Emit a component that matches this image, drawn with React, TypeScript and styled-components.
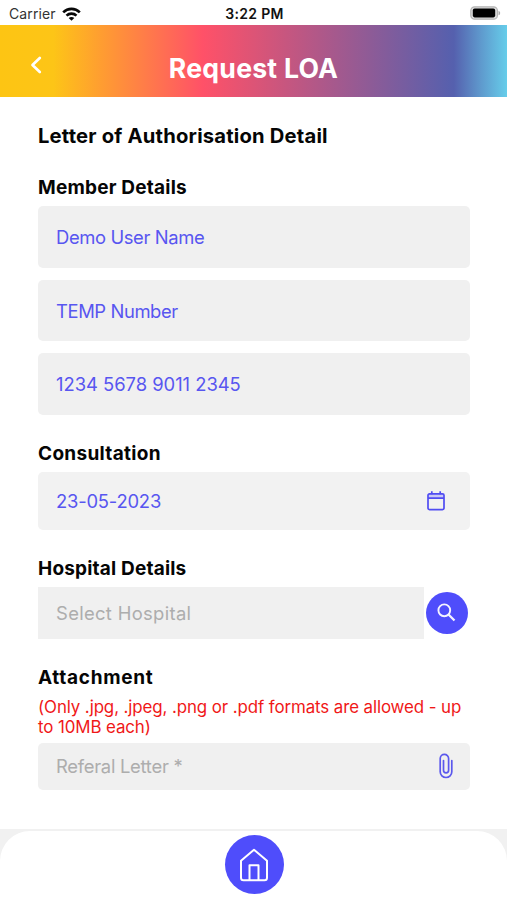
import React from "react";
import styled, { createGlobalStyle } from "styled-components";

const GlobalStyle = createGlobalStyle`
  * { box-sizing: border-box; }
  body { margin: 0; background: #fff; font-family: Inter, "Liberation Sans", sans-serif; }
`;

const Screen = styled.main`
  width: 507px;
  height: 900px;
  display: flex;
  flex-direction: column;
  background: #fff;
  overflow: hidden;
`;

const StatusBar = styled.div`
  height: 25px;
  flex: none;
  display: grid;
  grid-template-columns: 1fr auto 1fr;
  align-items: center;
  padding: 2px 6px 0 9px;
  color: #111;
`;

const Carrier = styled.span`
  display: flex;
  align-items: center;
  gap: 6px;
  font-size: 14px;
  letter-spacing: 0.1px;
  color: #333;
`;

const Clock = styled.span`
  margin-left: -1px;
  font-size: 14px;
  font-weight: 600;
  letter-spacing: 0.3px;
`;

const BatterySlot = styled.span`
  display: flex;
  justify-content: flex-end;
  padding-bottom: 1px;
`;

const Header = styled.header`
  height: 72px;
  flex: none;
  display: grid;
  grid-template-columns: 72px 1fr 72px;
  align-items: center;
  background: linear-gradient(90deg, #fdc513 0%, #fdc517 10.5%, #ff9d31 20%, #ff5168 40%, #5560ae 89.5%, #5f9bce 95%, #66cdea 100%);
`;

const BackButton = styled.button`
  border: 0;
  padding: 0;
  height: 32px;
  margin-top: 8px;
  background: none;
  display: flex;
  align-items: center;
  justify-content: center;
`;

const Title = styled.h1`
  margin: 14px 0 0;
  text-align: center;
  color: #fff;
  font-size: 26.6px;
  line-height: 34px;
  font-weight: 700;
  letter-spacing: 0.25px;
`;

const Content = styled.section`
  flex: none;
  height: 732px;
  padding: 25px 37px 0 38px;
`;

const PageHeading = styled.h2`
  margin: 0;
  font-size: 20.2px;
  line-height: 28px;
  font-weight: 700;
  letter-spacing: 0.2px;
  color: #050505;
`;

const Section = styled.section<{ $top: number }>`
  margin-top: ${(p) => p.$top}px;
`;

const SectionHeading = styled.h3<{ $spacing: number }>`
  margin: 0;
  height: 26px;
  font-size: 19px;
  line-height: 28px;
  font-weight: 700;
  letter-spacing: ${(p) => p.$spacing}px;
  color: #050505;
`;

const FieldStack = styled.div`
  margin-top: 6px;
  display: grid;
  gap: 12px;
`;

const Field = styled.div<{ $height: number; $shade?: string; $square?: boolean }>`
  flex: 1;
  height: ${(p) => p.$height}px;
  padding: 0 18px;
  display: flex;
  align-items: center;
  justify-content: space-between;
  border-radius: ${(p) => (p.$square ? 0 : 5)}px;
  background: ${(p) => p.$shade ?? "#f0f0f0"};
`;

const Value = styled.span<{ $spacing?: number; $muted?: boolean }>`
  font-size: 18.4px;
  line-height: 24px;
  letter-spacing: ${(p) => p.$spacing ?? 0}px;
  color: ${(p) => (p.$muted ? "#adadad" : "#5856f0")};
`;

const SearchRow = styled.div`
  margin-top: 6px;
  display: flex;
  align-items: center;
  gap: 2px;
  padding-right: 2px;
`;

const SearchButton = styled.button`
  width: 42px;
  height: 42px;
  border: 0;
  padding: 0 1px 1px 0;
  border-radius: 50%;
  background: #4f4dfb;
  display: flex;
  align-items: center;
  justify-content: center;
`;

const Notice = styled.p`
  margin: 7px 0 5px;
  font-size: 16.9px;
  line-height: 20.5px;
  letter-spacing: -0.1px;
  color: #f01818;
  white-space: nowrap;
`;

const IconSlot = styled.span<{ $shift: number }>`
  display: flex;
  margin-right: ${(p) => p.$shift}px;
`;

const Footer = styled.footer`
  height: 71px;
  flex: none;
  padding-top: 1.5px;
  background: #f1f1f1;
`;

const TabBar = styled.nav`
  height: 70px;
  border-radius: 30px 30px 0 0;
  background: #fff;
  display: flex;
  justify-content: center;
  padding: 4.5px 0 0 1px;
`;

const HomeButton = styled.button`
  width: 59px;
  height: 59px;
  border: 0;
  padding: 0;
  border-radius: 50%;
  background: #4f4dfb;
  display: flex;
  align-items: center;
  justify-content: center;
`;

const WifiIcon = () => (
  <svg width="19" height="14" viewBox="0 0 19 14" fill="none" stroke="#080808" strokeWidth="2.6">
    <path d="M1.2 5.3C5.8.7 13.2.7 17.8 5.3" />
    <path d="M4.5 8.6c2.8-2.7 7.2-2.7 10 0" />
    <path d="M9.5 13.8 6.7 11c1.5-1.5 4.1-1.5 5.6 0z" fill="#080808" stroke="none" />
  </svg>
);

const BatteryIcon = () => (
  <svg width="31" height="14" viewBox="0 0 31 14">
    <rect x="0.8" y="0.8" width="26.6" height="12.4" rx="3.8" fill="#ddd" stroke="#b4b4b4" strokeWidth="1.2" />
    <rect x="2.8" y="2.6" width="22.4" height="8.8" rx="1.8" fill="#000" />
    <path d="M28.5 4.7c2.2.8 2.2 3.8 0 4.6z" fill="#aaa" />
  </svg>
);

const BackIcon = () => (
  <svg width="12" height="18" viewBox="0 0 12 18" fill="none" stroke="#fff" strokeWidth="2.7" strokeLinecap="round" strokeLinejoin="round">
    <path d="M9.8 2 2.5 9l7.3 7" />
  </svg>
);

const CalendarIcon = () => (
  <svg width="18" height="20" viewBox="0 0 18 20" fill="none" stroke="#514df2" strokeWidth="1.7">
    <path d="M1.5 3h15v4h-15z" fill="#c9c8f6" stroke="none" />
    <rect x="1" y="2.8" width="16" height="15.8" rx="1.5" />
    <path d="M1 7.2h16M4.8.3v3M13.2.3v3" />
  </svg>
);

const SearchIcon = () => (
  <svg width="19" height="19" viewBox="0 0 19 19" fill="none" stroke="#f4f3ff" strokeWidth="1.9">
    <circle cx="7.3" cy="7.3" r="5.9" />
    <path d="m11.5 11.5 6 6" strokeWidth="2.3" />
  </svg>
);

const ClipIcon = () => (
  <svg width="14" height="26" viewBox="0 0 14 26" fill="none" stroke="#5b58ed" strokeWidth="1.7" strokeLinecap="round">
    <path d="M12.8 7.5v11.2a5.8 5.8 0 0 1-11.6 0V5.5a4.2 4.2 0 0 1 8.4 0v11.8a2.55 2.55 0 0 1-5.1 0V7.5" />
  </svg>
);

const HomeIcon = () => (
  <svg width="30" height="34" viewBox="0 0 30 34" fill="none" stroke="#fff" strokeWidth="2" strokeLinejoin="round">
    <path d="M15 1.8 2 12.7v17A2.5 2.5 0 0 0 4.5 32.2h21a2.5 2.5 0 0 0 2.5-2.5v-17z" />
    <path d="M10.5 32V17.2h9V32" />
  </svg>
);

const members = [
  { text: "Demo User Name", spacing: -0.37 },
  { text: "TEMP Number", spacing: -0.4 },
  { text: "1234 5678 9011 2345", spacing: -0.02 },
];

export default function App() {
  return (
    <>
      <GlobalStyle />
      <Screen>
        <StatusBar>
          <Carrier>Carrier <WifiIcon /></Carrier>
          <Clock>3:22 PM</Clock>
          <BatterySlot><BatteryIcon /></BatterySlot>
        </StatusBar>
        <Header>
          <BackButton aria-label="Back"><BackIcon /></BackButton>
          <Title>Request LOA</Title>
        </Header>
        <Content>
          <PageHeading>Letter of Authorisation Detail</PageHeading>
          <Section $top={24}>
            <SectionHeading $spacing={0.21}>Member Details</SectionHeading>
            <FieldStack>
              {members.map((m) => (
                <Field key={m.text} $height={61.7}>
                  <Value $spacing={m.spacing}>{m.text}</Value>
                </Field>
              ))}
            </FieldStack>
          </Section>
          <Section $top={24.5}>
            <SectionHeading $spacing={0.32}>Consultation</SectionHeading>
            <FieldStack>
              <Field $height={58} $shade="#f2f2f2">
                <Value $spacing={-0.2}>23-05-2023</Value>
                <IconSlot $shift={7}><CalendarIcon /></IconSlot>
              </Field>
            </FieldStack>
          </Section>
          <Section $top={25.4}>
            <SectionHeading $spacing={0.19}>Hospital Details</SectionHeading>
            <SearchRow>
              <Field $height={52} $square>
                <Value $muted $spacing={0.33}>Select Hospital</Value>
              </Field>
              <SearchButton aria-label="Search"><SearchIcon /></SearchButton>
            </SearchRow>
          </Section>
          <Section $top={25}>
            <SectionHeading $spacing={0.7}>Attachment</SectionHeading>
            <Notice>
              (Only .jpg, .jpeg, .png or .pdf formats are allowed - up
              <br />
              to 10MB each)
            </Notice>
            <Field $height={47}>
              <Value $muted $spacing={-0.27}>Referal Letter *</Value>
              <IconSlot $shift={-1}><ClipIcon /></IconSlot>
            </Field>
          </Section>
        </Content>
        <Footer>
          <TabBar>
            <HomeButton aria-label="Home"><HomeIcon /></HomeButton>
          </TabBar>
        </Footer>
      </Screen>
    </>
  );
}
